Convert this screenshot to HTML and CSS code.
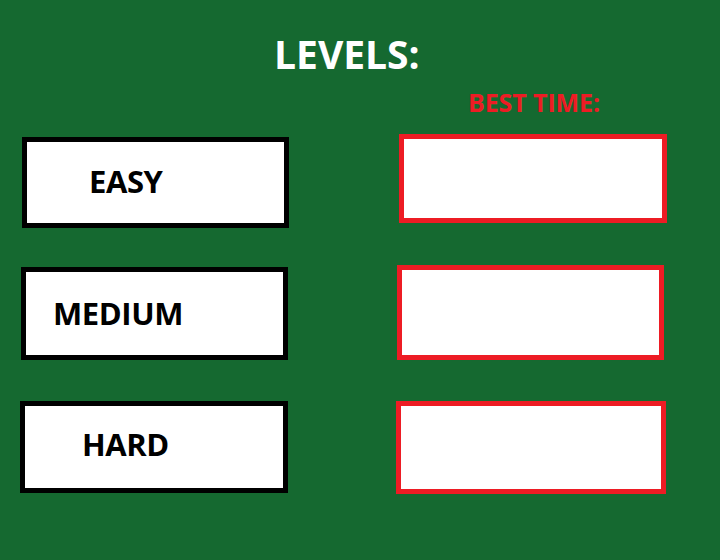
FILE: index.html
```html
<!DOCTYPE html>
<html>
<head>
<meta charset="utf-8">
<link rel="stylesheet" href="styles.css">
</head>
<body>
<div class="screen">
  <h1 class="title">LEVELS:</h1>
  <div class="best">BEST TIME:</div>
  <div class="rows">
    <div class="row row-1">
      <div class="level level-easy">EASY</div>
      <div class="time time-1"></div>
    </div>
    <div class="row row-2">
      <div class="level level-medium">MEDIUM</div>
      <div class="time time-2"></div>
    </div>
    <div class="row row-3">
      <div class="level level-hard">HARD</div>
      <div class="time time-3"></div>
    </div>
  </div>
</div>
</body>
</html>
```
FILE: styles.css
```css
html, body {
  margin: 0;
  padding: 0;
}
body {
  background: #156930;
  font-family: "Open Sans", "Liberation Sans", sans-serif;
}
.screen {
  width: 720px;
  height: 560px;
  background: #156930;
  overflow: hidden;
  display: flex;
  flex-direction: column;
}
.title {
  margin: 34px 0 0 274px;
  font-size: 39px;
  line-height: 39px;
  font-weight: 700;
  color: #ffffff;
}
.best {
  margin: 17px 0 0 468px;
  font-size: 25px;
  line-height: 25px;
  font-weight: 700;
  color: #ed1c24;
  letter-spacing: -0.1px;
}
.rows {
  display: flex;
  flex-direction: column;
}
.row {
  display: flex;
  align-items: flex-start;
}
.level {
  box-sizing: border-box;
  background: #ffffff;
  border: 5px solid #000000;
  display: flex;
  align-items: center;
  font-size: 31px;
  line-height: 31px;
  font-weight: 700;
  color: #000000;
  letter-spacing: -0.4px;
}
.time {
  box-sizing: border-box;
  background: #ffffff;
  border: 5px solid #ed1c24;
}
.row-1 { margin-top: 19px; }
.row-2 { margin-top: 37px; }
.row-3 { margin-top: 41px; }

.level-easy {
  margin: 3px 0 0 22px;
  width: 267px;
  height: 91px;
  padding: 0 0 2px 62px;
}
.time-1 {
  margin-left: 110px;
  width: 268px;
  height: 89px;
}
.level-medium {
  margin: 2px 0 0 21px;
  width: 267px;
  height: 93px;
  padding: 0 0 0 27px;
}
.time-2 {
  margin-left: 109px;
  width: 267px;
  height: 95px;
}
.level-hard {
  margin: 0 0 0 20px;
  width: 268px;
  height: 92px;
  padding: 0 0 6px 57px;
}
.time-3 {
  margin-left: 108px;
  width: 270px;
  height: 93px;
}
```
